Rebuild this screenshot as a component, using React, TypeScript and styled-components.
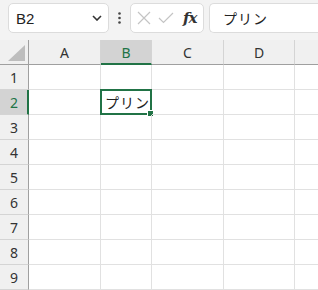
import React from "react";
import styled, { createGlobalStyle } from "styled-components";

const GlobalStyle = createGlobalStyle`
  html, body {
    margin: 0;
    padding: 0;
    background: #ffffff;
    overflow: hidden;
  }
  body {
    font-family: "Noto Sans", "Liberation Sans", "Noto Sans CJK JP", sans-serif;
  }
`;

const Page = styled.div`
  width: 318px;
  height: 290px;
  overflow: hidden;
  display: flex;
  flex-direction: column;
`;

const Toolbar = styled.div`
  height: 40px;
  flex: none;
  background: #f3f3f3;
  display: flex;
  align-items: flex-start;
  padding: 3px 0 0 8px;
  box-sizing: border-box;
  overflow: hidden;
`;

const NameBox = styled.div`
  width: 101px;
  height: 30px;
  box-sizing: border-box;
  background: #ffffff;
  border: 1px solid #dcdcdc;
  border-radius: 5px;
  display: flex;
  align-items: center;
  justify-content: space-between;
  padding: 0 6px 0 7px;
  font-family: "Liberation Sans", Arial, sans-serif;
  font-size: 15px;
  color: #222222;
  flex: none;
`;

const Dots = styled.div`
  width: 21px;
  height: 30px;
  display: flex;
  align-items: center;
  justify-content: center;
  flex: none;
`;

const ButtonBox = styled.div`
  width: 74px;
  height: 30px;
  box-sizing: border-box;
  background: #ffffff;
  border: 1px solid #dcdcdc;
  border-radius: 5px;
  display: flex;
  align-items: center;
  padding: 0 0 0 6px;
  gap: 7px;
  flex: none;
`;

const Fx = styled.span`
  font-family: "DejaVu Serif", "Liberation Serif", serif;
  font-style: italic;
  font-weight: bold;
  font-size: 15px;
  color: #333333;
  letter-spacing: -1px;
  margin-left: 2px;
`;

const FormulaInput = styled.div`
  margin-left: 5px;
  flex: 1;
  min-width: 160px;
  height: 30px;
  box-sizing: border-box;
  background: #ffffff;
  border: 1px solid #dcdcdc;
  border-right: none;
  border-radius: 5px 0 0 5px;
  display: flex;
  align-items: center;
  padding-left: 13px;
  font-family: "Noto Sans CJK JP", sans-serif;
  font-size: 14px;
  color: #222222;
  letter-spacing: 1px;
`;

const Sheet = styled.div`
  display: grid;
  grid-template-columns: 29px 72px 51px 72px 71px 60px;
  grid-auto-rows: 25px;
  background: #ffffff;
`;

const Corner = styled.div`
  background: #f0f0f0;
  border-right: 1px solid #9f9f9f;
  border-bottom: 1px solid #9f9f9f;
  box-sizing: border-box;
  position: relative;
  display: flex;
  align-items: flex-end;
  justify-content: flex-end;
  padding: 0 3px 3px 0;
`;

const ColHeader = styled.div<{ $active?: boolean }>`
  box-sizing: border-box;
  background: ${(p) => (p.$active ? "#d3d3d3" : "#f0f0f0")};
  color: ${(p) => (p.$active ? "#217346" : "#333333")};
  border-right: 1px solid #d4d4d4;
  border-bottom: ${(p) => (p.$active ? "2px solid #217346" : "1px solid #9f9f9f")};
  display: flex;
  align-items: center;
  justify-content: center;
  font-size: 14px;
  padding-top: ${(p) => (p.$active ? "1px" : "0")};
`;

const RowHeader = styled.div<{ $active?: boolean }>`
  box-sizing: border-box;
  background: ${(p) => (p.$active ? "#d3d3d3" : "#f0f0f0")};
  color: ${(p) => (p.$active ? "#217346" : "#333333")};
  border-right: ${(p) => (p.$active ? "2px solid #217346" : "1px solid #9f9f9f")};
  border-bottom: 1px solid #d4d4d4;
  display: flex;
  align-items: center;
  justify-content: center;
  font-size: 14px;
  padding-left: ${(p) => (p.$active ? "1px" : "0")};
`;

const Cell = styled.div`
  box-sizing: border-box;
  border-right: 1px solid #e1e1e1;
  border-bottom: 1px solid #e1e1e1;
  position: relative;
  display: flex;
  align-items: center;
  padding-left: 4px;
  font-family: "Noto Sans CJK JP", sans-serif;
  font-size: 14px;
  color: #222222;
  letter-spacing: 1px;
  white-space: nowrap;
`;

const Selection = styled.div`
  position: absolute;
  left: -1px;
  top: -1px;
  right: -1px;
  bottom: -1px;
  border: 2px solid #217346;
  pointer-events: none;
`;

const Handle = styled.div`
  position: absolute;
  right: -4px;
  bottom: -4px;
  width: 5px;
  height: 5px;
  background: #217346;
  border: 1px solid #ffffff;
`;

const columns = ["A", "B", "C", "D", ""];
const rows = [1, 2, 3, 4, 5, 6, 7, 8, 9];

const App = () => {
  return (
    <Page>
      <GlobalStyle />
      <Toolbar>
        <NameBox>
          <span>B2</span>
          <svg width="10" height="6" viewBox="0 0 10 6">
            <path d="M1 1 L5 5 L9 1" fill="none" stroke="#333" strokeWidth="1.6" />
          </svg>
        </NameBox>
        <Dots>
          <svg width="3" height="12" viewBox="0 0 3 12">
            <circle cx="1.5" cy="1.5" r="1.3" fill="#444" />
            <circle cx="1.5" cy="6" r="1.3" fill="#444" />
            <circle cx="1.5" cy="10.5" r="1.3" fill="#444" />
          </svg>
        </Dots>
        <ButtonBox>
          <svg width="14" height="14" viewBox="0 0 14 14">
            <path d="M1 1 L13 13 M13 1 L1 13" stroke="#c4c4c4" strokeWidth="1.2" />
          </svg>
          <svg width="16" height="12" viewBox="0 0 16 12">
            <path d="M1 6 L5.5 10.5 L15 1" fill="none" stroke="#c4c4c4" strokeWidth="1.2" />
          </svg>
          <Fx>fx</Fx>
        </ButtonBox>
        <FormulaInput>プリン</FormulaInput>
      </Toolbar>
      <Sheet>
        <Corner>
          <svg width="17" height="16" viewBox="0 0 17 16">
            <polygon points="17,0 17,16 0,16" fill="#bdbdbd" />
          </svg>
        </Corner>
        {columns.map((c, i) => (
          <ColHeader key={i} $active={c === "B"}>
            {c}
          </ColHeader>
        ))}
        {rows.map((r) => (
          <React.Fragment key={r}>
            <RowHeader $active={r === 2}>{r}</RowHeader>
            {columns.map((c, i) => (
              <Cell key={i}>
                {r === 2 && c === "B" && (
                  <>
                    プリン
                    <Selection>
                      <Handle />
                    </Selection>
                  </>
                )}
              </Cell>
            ))}
          </React.Fragment>
        ))}
      </Sheet>
    </Page>
  );
};

export default App;
